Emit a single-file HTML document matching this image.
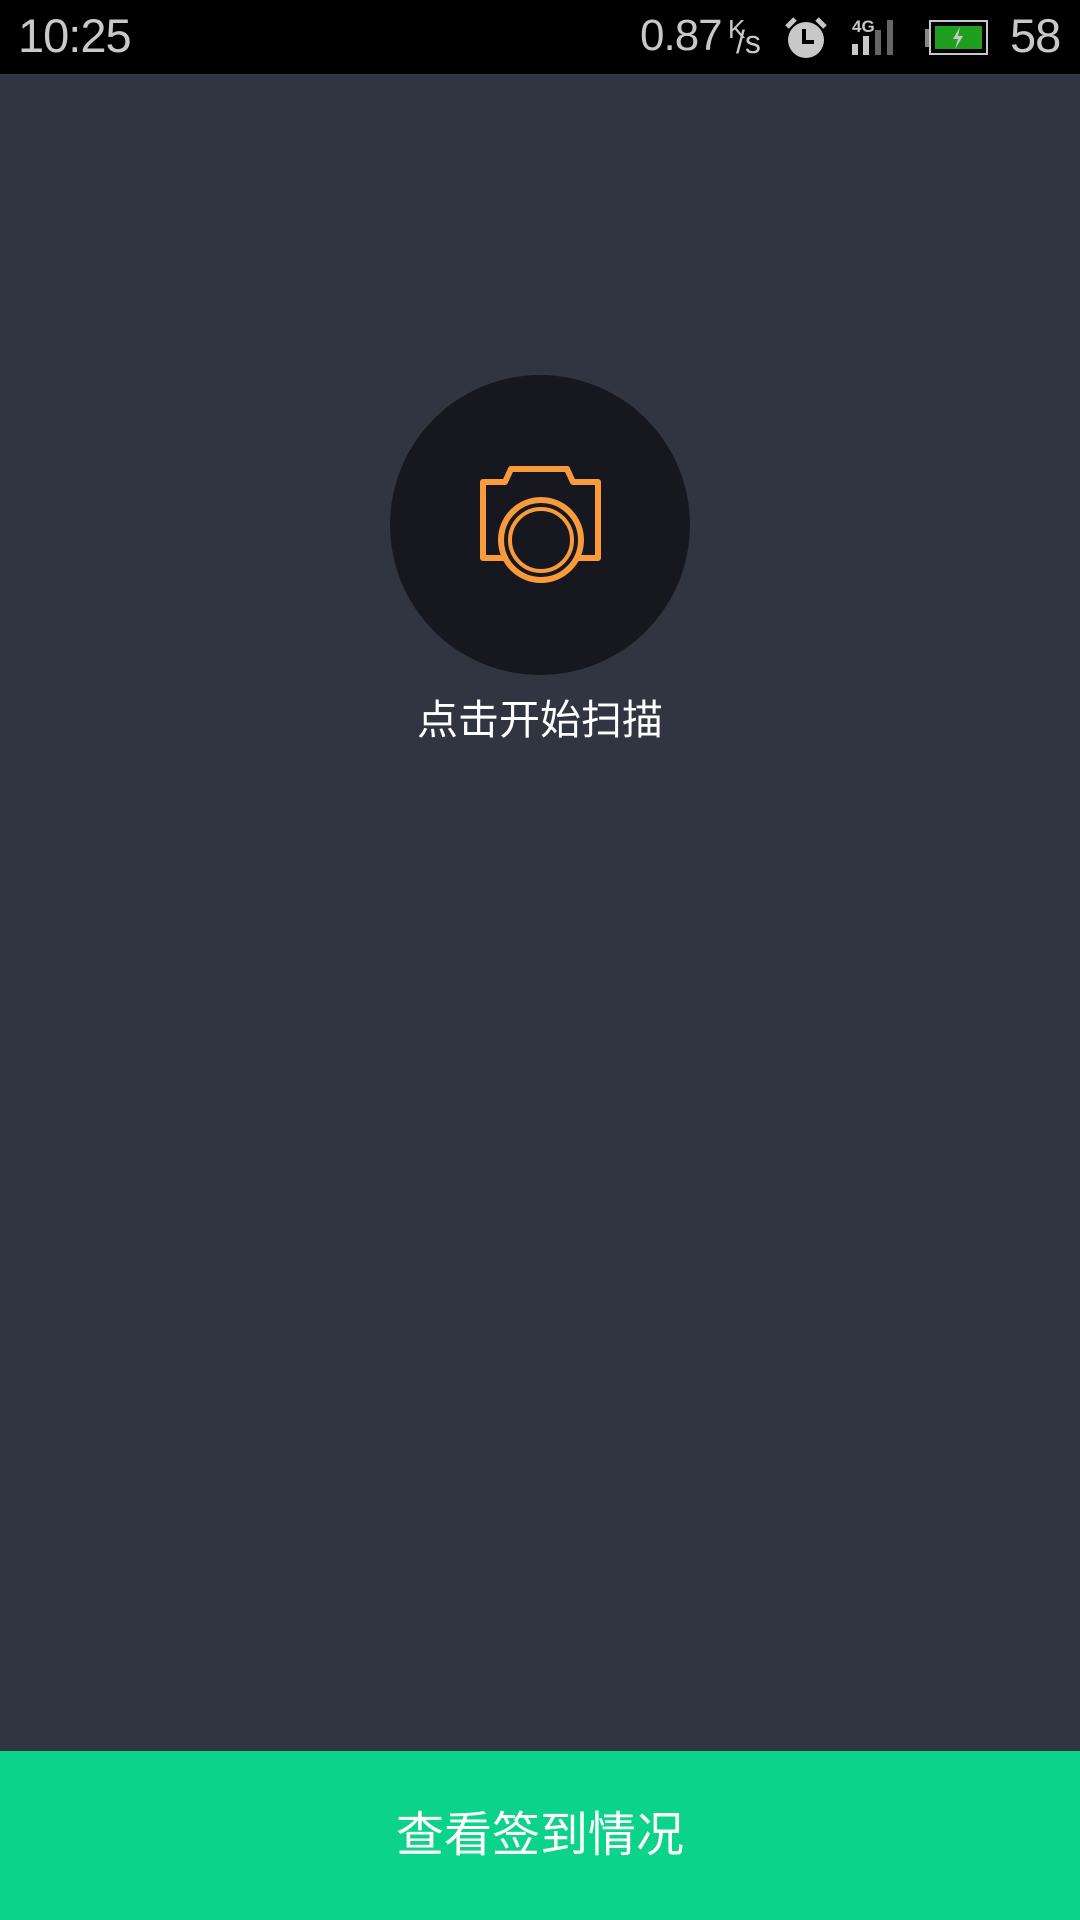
<!DOCTYPE html>
<html><head><meta charset="utf-8"><style>
html,body{margin:0;padding:0}
body{width:1080px;height:1920px;background:#313541;position:relative;overflow:hidden;font-family:"Liberation Sans","Noto Sans CJK SC",sans-serif}
.sb{position:absolute;left:0;top:0;width:1080px;height:74px;background:#000;color:#c8c8c8}
.t{position:absolute;top:8px;font-size:47px;letter-spacing:-1px}
.circle{position:absolute;left:390px;top:375px;width:300px;height:300px;border-radius:50%;background:#17181f}
.lbl{position:absolute;left:0;width:1080px;top:686px;text-align:center;color:#fff;font-size:41px}
.btn{position:absolute;left:0;top:1751px;width:1080px;height:169px;background:#0bd389;color:#fff;font-size:48px;text-align:center;line-height:169px}
</style></head><body>
<div class="sb">
<div class="t" style="left:18px">10:25</div>
<div class="t" style="left:640px;font-size:44px;top:11px">0.87</div>
<div style="position:absolute;left:728px;top:14px;font-size:26px">K</div>
<div style="position:absolute;left:736px;top:24px;font-size:32px;">/s</div>
<svg style="position:absolute;left:782px;top:15px" width="48" height="46" viewBox="0 0 48 46">
<circle cx="24" cy="25" r="18" fill="#c8c8c8"/>
<path d="M5 12 L13 4 M43 12 L35 4" stroke="#c8c8c8" stroke-width="5"/>
<path d="M22 14 V27 H32" stroke="#000" stroke-width="4" fill="none"/>
</svg>
<div style="position:absolute;left:852px;top:17px;font-size:17px;font-weight:bold;color:#c8c8c8">4G</div>
<div style="position:absolute;left:852px;top:44px;width:6px;height:11px;background:#c8c8c8"></div>
<div style="position:absolute;left:863px;top:36px;width:6px;height:19px;background:#c8c8c8"></div>
<div style="position:absolute;left:875px;top:30px;width:6px;height:25px;background:#666"></div>
<div style="position:absolute;left:887px;top:20px;width:6px;height:35px;background:#666"></div>
<div style="position:absolute;left:925px;top:29px;width:4px;height:18px;background:#888"></div>
<div style="position:absolute;left:929px;top:20px;width:55px;height:31px;border:2px solid #c8c8c8;background:#000"></div>
<div style="position:absolute;left:935px;top:26px;width:47px;height:23px;background:#1f9e1f"></div>
<svg style="position:absolute;left:950px;top:27px" width="16" height="22" viewBox="0 0 16 22"><path d="M10 0 L3 12 H8 L5 22 L13 9 H8 Z" fill="#c8c8c8"/></svg>
<div class="t" style="left:1010px">58</div>
</div>
<div class="circle"></div>
<svg style="position:absolute;left:478px;top:465px" width="126" height="122" viewBox="0 0 126 122" fill="none" stroke="#f89b3c" stroke-width="6" stroke-linejoin="round">
<path d="M26 93 H5 V17 H27 L33 4 H89 L95 17 H120 V93 H100"/>
<circle cx="63" cy="75" r="40"/>
<circle cx="63" cy="75" r="31" stroke-width="4"/>
</svg>
<div class="lbl">点击开始扫描</div>
<div class="btn">查看签到情况</div>
</body></html>
